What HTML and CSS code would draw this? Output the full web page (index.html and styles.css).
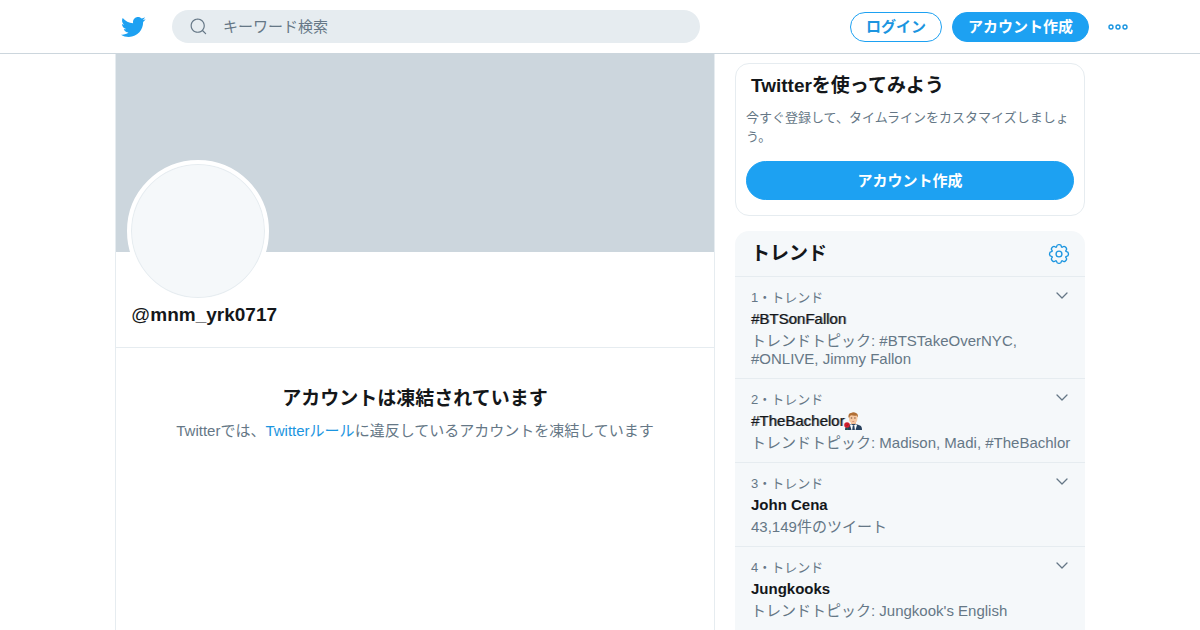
FILE: index.html
```html
<!DOCTYPE html>
<html lang="ja">
<head>
  <meta charset="UTF-8">
  <title>@mnm_yrk0717 / Twitter</title>
  <meta name="viewport" content="width=device-width, initial-scale=1">
  <link rel="stylesheet" href="styles.css">
</head>
<body>
  <svg width="0" height="0" class="sprite" aria-hidden="true">
    <symbol id="chevron" viewBox="0 0 14 14">
      <path d="M2 4l5 5 5-5" fill="none" stroke="currentColor" stroke-width="1.3" stroke-linecap="round" stroke-linejoin="round"/>
    </symbol>
  </svg>

  <header class="topbar">
    <div class="topbar-inner">
      <a class="logo" href="#" aria-label="Twitter">
        <svg viewBox="0 0 24 24"><path fill="currentColor" d="M23.643 4.937c-.835.37-1.732.62-2.675.733.962-.576 1.7-1.49 2.048-2.578-.9.534-1.897.922-2.958 1.13-.85-.904-2.06-1.47-3.4-1.47-2.572 0-4.658 2.086-4.658 4.66 0 .364.042.718.12 1.06-3.873-.195-7.304-2.05-9.602-4.868-.4.69-.63 1.49-.63 2.342 0 1.616.823 3.043 2.072 3.878-.764-.025-1.482-.234-2.11-.583v.06c0 2.257 1.605 4.14 3.737 4.568-.392.106-.803.162-1.227.162-.3 0-.593-.028-.877-.082.593 1.85 2.313 3.198 4.352 3.234-1.595 1.25-3.604 1.995-5.786 1.995-.376 0-.747-.022-1.112-.065 2.062 1.323 4.51 2.093 7.14 2.093 8.57 0 13.255-7.098 13.255-13.254 0-.2-.005-.402-.014-.602.91-.658 1.7-1.477 2.323-2.41z"/></svg>
      </a>
      <form class="search" role="search">
        <svg class="search-icon" viewBox="0 0 24 24"><path fill="currentColor" d="M21.53 20.47l-3.66-3.66C19.195 15.24 20 13.214 20 11c0-4.97-4.03-9-9-9s-9 4.03-9 9 4.03 9 9 9c2.215 0 4.24-.804 5.808-2.13l3.66 3.66c.147.146.34.22.53.22s.385-.073.53-.22c.295-.293.295-.767.002-1.06zM3.5 11c0-4.135 3.365-7.5 7.5-7.5s7.5 3.365 7.5 7.5-3.365 7.5-7.5 7.5-7.5-3.365-7.5-7.5z"/></svg>
        <input type="search" placeholder="キーワード検索" aria-label="キーワード検索">
      </form>
      <nav class="actions">
        <a class="btn btn-outline" href="#">ログイン</a>
        <a class="btn btn-fill" href="#">アカウント作成</a>
        <button class="more" type="button" aria-label="もっと見る">
          <svg viewBox="0 0 22 8" fill="none" stroke="currentColor" stroke-width="1.4"><circle cx="4" cy="4" r="2"/><circle cx="11" cy="4" r="2"/><circle cx="18" cy="4" r="2"/></svg>
        </button>
      </nav>
    </div>
  </header>

  <div class="page">
    <main class="profile">
      <div class="banner"></div>
      <div class="profile-head">
        <div class="avatar"></div>
        <h1 class="handle"><span class="at">@</span>mnm_yrk0717</h1>
      </div>
      <section class="notice">
        <h2>アカウントは凍結されています</h2>
        <p>Twitterでは、<a href="#">Twitterルール</a>に違反しているアカウントを凍結しています</p>
      </section>
    </main>

    <aside class="sidebar">
      <section class="signup">
        <h2>Twitterを使ってみよう</h2>
        <p>今すぐ登録して、タイムラインをカスタマイズしましょう。</p>
        <a class="btn btn-fill btn-wide" href="#">アカウント作成</a>
      </section>

      <section class="trends">
        <div class="trends-head">
          <h2>トレンド</h2>
          <button class="gear" type="button" aria-label="設定">
            <svg viewBox="1 1 22 22" fill="none" stroke="currentColor" stroke-width="1.5"><circle cx="12" cy="12" r="3.2"/><path d="M12.36 22.375h-.722c-1.183 0-2.154-.888-2.262-2.064l-.014-.147c-.025-.287-.207-.533-.472-.644-.286-.12-.582-.065-.798.115l-.116.097c-.868.725-2.253.663-3.06-.14l-.51-.51c-.836-.84-.896-2.154-.14-3.06l.098-.118c.186-.222.23-.523.122-.787-.11-.272-.358-.454-.646-.48l-.15-.014c-1.18-.107-2.067-1.08-2.067-2.262v-.722c0-1.183.888-2.154 2.064-2.262l.156-.014c.285-.025.53-.207.642-.473.11-.27.065-.573-.12-.795l-.094-.116c-.757-.908-.698-2.223.137-3.06l.512-.512c.804-.804 2.188-.865 3.06-.14l.116.098c.218.184.528.23.79.122.27-.112.452-.358.477-.643l.014-.153c.107-1.18 1.08-2.066 2.262-2.066h.722c1.183 0 2.154.888 2.262 2.064l.014.156c.025.285.206.53.472.64.277.117.58.062.794-.117l.12-.102c.867-.723 2.254-.662 3.06.14l.51.512c.836.838.896 2.153.14 3.06l-.1.118c-.188.22-.234.522-.123.788.112.27.36.45.646.478l.152.014c1.18.107 2.067 1.08 2.067 2.262v.723c0 1.183-.888 2.154-2.064 2.262l-.155.014c-.284.024-.53.205-.64.47-.113.272-.067.574.117.795l.1.12c.756.905.696 2.22-.14 3.06l-.51.51c-.807.804-2.19.864-3.06.14l-.115-.096c-.217-.183-.53-.23-.79-.122-.273.114-.455.36-.48.646l-.014.15c-.107 1.173-1.08 2.06-2.262 2.06z"/></svg>
          </button>
        </div>

        <article class="trend">
          <div class="trend-body">
            <p class="meta">1・トレンド</p>
            <h3 class="tag">#BTSonFallon</h3>
            <p class="desc">トレンドトピック: #BTSTakeOverNYC, #ONLIVE, Jimmy Fallon</p>
          </div>
          <button class="caret" type="button" aria-label="メニュー"><svg><use href="#chevron"/></svg></button>
        </article>
        <article class="trend">
          <div class="trend-body">
            <p class="meta">2・トレンド</p>
            <h3 class="tag">#TheBachelor
              <svg class="emoji" viewBox="0 0 18 18">
                <path fill="#f0b58c" d="M7 9h5v5H7z"/>
                <path fill="#f7c9a3" d="M5 4q0-3 4.200-3t4.200 3v2.500q0 4.500-4.200 5Q5 11 5 6.500z"/>
                <path fill="#b06f35" d="M4.500 5.500Q4 1.500 7 1q2.500-1.500 5 0 2.500.5 1.700 4.500l-1-2q-3 .5-5.500-.3-1.700.3-1.700 2.300z"/>
                <path fill="#6a4a35" d="M6.800 5.500h1.400v1H6.800zM10.200 5.500h1.400v1h-1.400z"/>
                <path fill="#c9705c" d="M7.800 9h2.800q-1.400 1.500-2.800 0z"/>
                <path fill="#28415f" d="M1 18q0-4 2.500-4.500L7 12h5l4 1.500q2 .5 2 4.500z"/>
                <path fill="#fff" d="M7 12.200l2.500 1.300 2.500-1.300 1 .8-1.500 5h-4L6 13z"/>
                <path fill="#28415f" d="M8.800 13.500h1.500l.6 4.500H8.200z"/>
                <path fill="#3d7a3a" d="M2.500 13l1.500 5H3z"/>
                <circle cx="3" cy="13" r="2.800" fill="#d8202f"/>
                <path d="M1.500 13q1.500 1.500 3-.5M2.500 11.500l1.500 1" stroke="#9d1528" stroke-width=".7" fill="none"/>
              </svg>
            </h3>
            <p class="desc">トレンドトピック: Madison, Madi, #TheBachlor</p>
          </div>
          <button class="caret" type="button" aria-label="メニュー"><svg><use href="#chevron"/></svg></button>
        </article>
        <article class="trend">
          <div class="trend-body">
            <p class="meta">3・トレンド</p>
            <h3>John Cena</h3>
            <p class="desc">43,149件のツイート</p>
          </div>
          <button class="caret" type="button" aria-label="メニュー"><svg><use href="#chevron"/></svg></button>
        </article>
        <article class="trend">
          <div class="trend-body">
            <p class="meta">4・トレンド</p>
            <h3>Jungkooks</h3>
            <p class="desc">トレンドトピック: Jungkook's English</p>
          </div>
          <button class="caret" type="button" aria-label="メニュー"><svg><use href="#chevron"/></svg></button>
        </article>
      </section>
    </aside>
  </div>
</body>
</html>
```
FILE: styles.css
```css
* {
  box-sizing: border-box;
}
body {
  margin: 0;
  background: #fff;
  color: #14171a;
  font-family: "Liberation Sans", Arial, "Noto Sans CJK JP", sans-serif;
  font-size: 15px;
  line-height: 19px;
}
h1, h2, h3, p {
  margin: 0;
}
h1, h2 {
  font-size: 19px;
  line-height: 24px;
}
h3 {
  font-size: 15px;
  line-height: 19px;
}
a {
  color: #1b95e0;
  text-decoration: none;
}
button {
  padding: 0;
  border: 0;
  background: none;
  color: #1b95e0;
  cursor: pointer;
}
svg {
  display: block;
}
.sprite {
  display: none;
}

/* header */
.topbar {
  border-bottom: 1px solid #ccd6dd;
}
.topbar-inner {
  display: flex;
  align-items: center;
  max-width: 1060px;
  height: 53px;
  margin: 0 auto;
  padding: 0 1px 0 50px;
}
.logo {
  color: #1da1f2;
}
.logo svg {
  width: 26px;
  height: 26px;
}
.search {
  display: flex;
  align-items: center;
  flex: 0 1 528px;
  height: 33px;
  margin-left: 26px;
  padding: 0 17px;
  border-radius: 17px;
  background: #e6ecf0;
  color: #657786;
}
.search-icon {
  flex: none;
  width: 19px;
  height: 19px;
}
.search input {
  flex: 1;
  min-width: 0;
  margin-left: 15px;
  padding: 0;
  border: 0;
  outline: none;
  background: none;
  font: inherit;
}
.search input::placeholder {
  color: #657786;
}
.actions {
  display: flex;
  align-items: center;
  margin-left: auto;
}
.btn {
  height: 30px;
  padding: 0 15px;
  border: 1px solid #1da1f2;
  border-radius: 20px;
  font-weight: bold;
  line-height: 28px;
  text-align: center;
  white-space: nowrap;
}
.btn-outline {
  margin-right: 10px;
  color: #1b95e0;
}
.btn-fill {
  background: #1da1f2;
  color: #fff;
}
.btn-wide {
  display: block;
  height: 39px;
  line-height: 37px;
}
.more {
  margin-left: 18px;
}
.more svg {
  width: 22px;
  height: 8px;
}

/* columns */
.page {
  display: flex;
  gap: 20px;
  max-width: 970px;
  margin: 0 auto;
}
.profile {
  flex: 1;
  min-width: 0;
  min-height: calc(100vh - 54px);
  border: 1px solid #e6ecf0;
  border-width: 0 1px;
}
.banner {
  height: 198px;
  background: #ccd6dd;
}
.profile-head {
  padding: 0 11px 20px;
  border-bottom: 1px solid #e6ecf0;
}
.avatar {
  width: 142px;
  height: 142px;
  margin-top: -92px;
  border: 4px solid #fff;
  border-radius: 50%;
  background: #f5f8fa;
  box-shadow: inset 0 0 0 1px #e6ecf0;
}
.handle {
  padding: 1px 4px 0;
}
.handle .at {
  font-weight: normal;
}
.notice {
  padding: 39px 20px;
  text-align: center;
}
.notice p {
  margin-top: 10px;
  color: #657786;
}

/* sidebar */
.sidebar {
  flex: 0 0 350px;
  padding-top: 9px;
}
.signup {
  padding: 10px 10px 15px;
  border: 1px solid #e6ecf0;
  border-radius: 14px;
}
.signup h2 {
  padding: 0 5px;
}
.signup p {
  margin: 10px 0 15px;
  color: #657786;
  font-size: 13px;
}
.trends {
  margin-top: 15px;
  border-radius: 14px 14px 0 0;
  background: #f5f8fa;
}
.trends-head {
  display: flex;
  align-items: center;
  justify-content: space-between;
  height: 46px;
  padding: 0 16px;
  border-bottom: 1px solid #e6ecf0;
}
.gear svg {
  width: 20px;
  height: 20px;
  overflow: visible;
}
.trend {
  display: flex;
  align-items: flex-start;
  justify-content: space-between;
  padding: 11px 16px 10px;
}
.trend + .trend {
  border-top: 1px solid #e6ecf0;
}
.trend-body {
  display: flex;
  flex-direction: column;
  flex: 1;
  gap: 2px;
  /* long descriptions run under the caret */
  margin-right: -20px;
}
.meta {
  color: #657786;
  font-size: 13px;
}
.desc {
  margin-top: 2px;
  color: #657786;
  line-height: 18px;
}
.tag {
  display: flex;
  align-items: center;
  font-weight: normal;
  text-shadow: 1px 0 0 rgba(20, 23, 26, 0.5);
}
.emoji {
  width: 18px;
  height: 18px;
}
.caret {
  padding-top: 1px;
  color: #657786;
}
.caret svg {
  width: 14px;
  height: 14px;
}
```
